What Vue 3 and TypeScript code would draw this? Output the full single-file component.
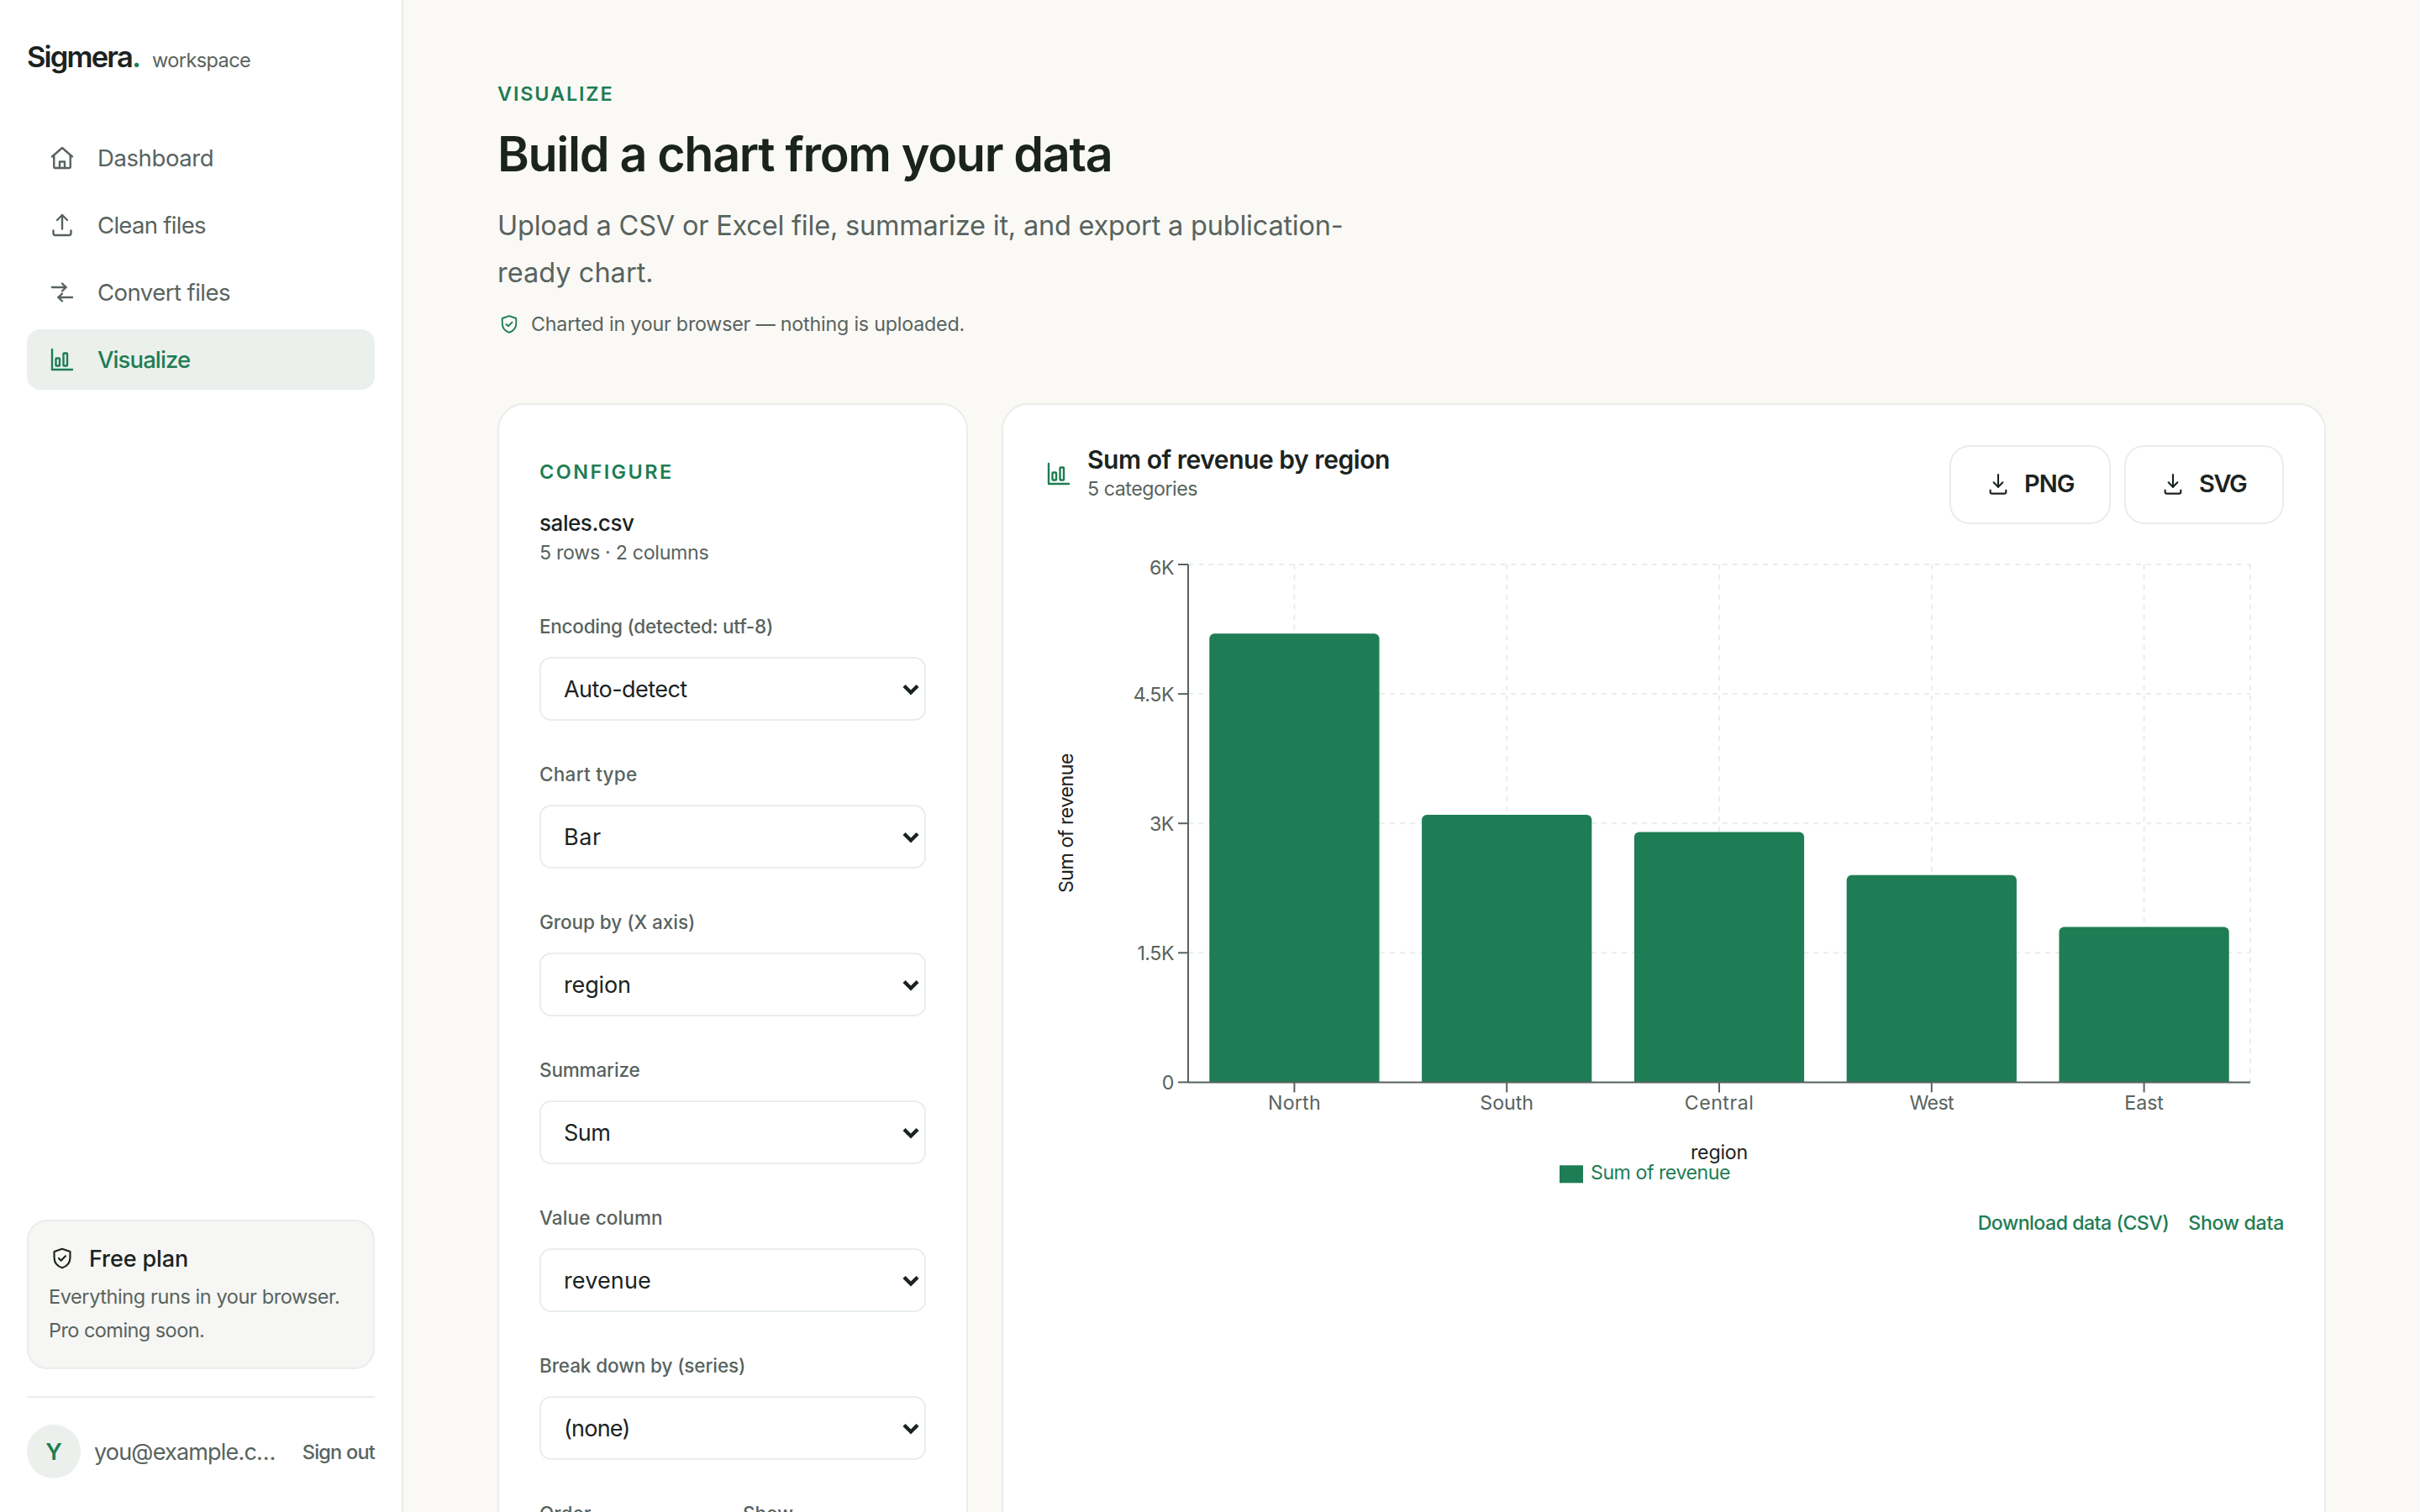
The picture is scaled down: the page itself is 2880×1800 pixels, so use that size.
<script setup lang="ts">
interface NavItem { label: string; icon: string[]; spacing: number; active?: boolean }
interface Field { label: string; labelSpacing: number; value: string; valueSpacing: number }
interface Region { name: string; revenue: number; spacing: number }

const chartIcon = ['M4 4v16h16', 'M7.5 11h2a.5.5 0 0 1 .5.5v5a.5.5 0 0 1-.5.5h-2a.5.5 0 0 1-.5-.5v-5a.5.5 0 0 1 .5-.5z', 'M13.5 7h2a.5.5 0 0 1 .5.5v9a.5.5 0 0 1-.5.5h-2a.5.5 0 0 1-.5-.5v-9a.5.5 0 0 1 .5-.5z']
const shieldIcon = ['M12 3.5l7.1 2.5v5.2c0 4.5-2.9 7.8-7.1 9.3-4.2-1.5-7.1-4.8-7.1-9.3V6z', 'M9 12l2 2 4-4']
const downloadIcon = ['M12 3v11', 'M8 10l4 4 4-4', 'M5 17v1.5A1.5 1.5 0 0 0 6.5 20h11a1.5 1.5 0 0 0 1.5-1.5V17']

const nav: NavItem[] = [
  { label: 'Dashboard', spacing: -0.0145, icon: ['M4 11l8-7 8 7', 'M5.5 10v9a1 1 0 0 0 1 1h11a1 1 0 0 0 1-1v-9', 'M10 20v-5h4v5'] },
  { label: 'Clean files', spacing: -0.0255, icon: ['M12 15V4', 'M8 8l4-4 4 4', 'M5 16.3v2.2A1.5 1.5 0 0 0 6.5 20h11a1.5 1.5 0 0 0 1.5-1.5v-2.2'] },
  { label: 'Convert files', spacing: -0.0195, icon: ['M4 8h11', 'M12 5l3 3-3 3', 'M20 16H9', 'M12 13l-3 3 3 3'] },
  { label: 'Visualize', spacing: -0.033, icon: chartIcon, active: true },
]

const fields: Field[] = [
  { label: 'Encoding (detected: utf-8)', labelSpacing: -0.0109, value: 'Auto-detect', valueSpacing: -0.0204 },
  { label: 'Chart type', labelSpacing: 0.0122, value: 'Bar', valueSpacing: 0.02 },
  { label: 'Group by (X axis)', labelSpacing: -0.002, value: 'region', valueSpacing: -0.0055 },
  { label: 'Summarize', labelSpacing: -0.0065, value: 'Sum', valueSpacing: -0.02 },
  { label: 'Value column', labelSpacing: 0.0052, value: 'revenue', valueSpacing: 0.0047 },
  { label: 'Break down by (series)', labelSpacing: -0.0046, value: '(none)', valueSpacing: -0.0287 },
]
const pairLabels: string[] = ['Order', 'Show']

const regions: Region[] = [
  { name: 'North', revenue: 5200, spacing: 0.0102 },
  { name: 'South', revenue: 3100, spacing: 0 },
  { name: 'Central', revenue: 2900, spacing: 0.0216 },
  { name: 'West', revenue: 2400, spacing: -0.0277 },
  { name: 'East', revenue: 1800, spacing: -0.0028 },
]

const plot = { left: 172, top: 32, width: 1264, height: 616.4 }
const bottom = plot.top + plot.height
const right = plot.left + plot.width
const maxValue = 6000
const yOf = (v: number): number => bottom - (v / maxValue) * plot.height
const band = plot.width / regions.length
const barWidth = band * 0.8
const radius = 6

const bars = regions.map((r, i) => {
  const center = plot.left + band * (i + 0.5)
  const x = center - barWidth / 2
  const y = yOf(r.revenue)
  const d = `M${x} ${bottom}V${y + radius}a${radius} ${radius} 0 0 1 ${radius} ${-radius}h${barWidth - 2 * radius}a${radius} ${radius} 0 0 1 ${radius} ${radius}V${bottom}Z`
  return { ...r, center, d }
})
const yTicks = [
  { label: '0', value: 0 },
  { label: '1.5K', value: 1500 },
  { label: '3K', value: 3000 },
  { label: '4.5K', value: 4500 },
  { label: '6K', value: 6000 },
].map((t) => ({ ...t, y: yOf(t.value), textY: yOf(t.value) + (t.value === maxValue ? 11.7 : 8.9) }))
</script>

<template>
  <div class="app">
    <aside class="sidebar">
      <div class="brand">
        <span class="brand-name">Sigmera<span class="brand-dot">.</span></span>
        <span class="brand-sub">workspace</span>
      </div>
      <nav class="nav">
        <a v-for="item in nav" :key="item.label" class="nav-item" :class="{ active: item.active }">
          <svg class="icon icon-lg" viewBox="0 0 24 24"><path v-for="d in item.icon" :key="d" :d="d" /></svg>
          <span :style="{ letterSpacing: item.spacing + 'em' }">{{ item.label }}</span>
        </a>
      </nav>
      <div class="sidebar-foot">
        <section class="plan">
          <div class="plan-head">
            <svg class="icon icon-md" viewBox="0 0 24 24"><path v-for="d in shieldIcon" :key="d" :d="d" /></svg>
            <span class="plan-name">Free plan</span>
          </div>
          <p class="plan-text"><span class="plan-line">Everything runs in your browser.</span><br /><span class="plan-line tight">Pro coming soon.</span></p>
        </section>
        <div class="user">
          <span class="avatar">Y</span>
          <span class="email">you@example.c…</span>
          <a class="signout">Sign out</a>
        </div>
      </div>
    </aside>

    <main class="main">
      <header class="page-head">
        <div class="eyebrow">VISUALIZE</div>
        <h1 class="title">Build a chart from your data</h1>
        <p class="subtitle">Upload a CSV or Excel file, summarize it, and export a publication-<br /><span class="subtitle-end">ready chart.</span></p>
        <div class="note">
          <svg class="icon icon-sm green" viewBox="0 0 24 24"><path v-for="d in shieldIcon" :key="d" :d="d" /></svg>
          <span>Charted in your browser — nothing is uploaded.</span>
        </div>
      </header>

      <div class="columns">
        <section class="card config">
          <div class="eyebrow config-eyebrow">CONFIGURE</div>
          <div class="file-name">sales.csv</div>
          <div class="file-meta">5 rows · 2 columns</div>
          <div class="fields">
            <div v-for="f in fields" :key="f.label" class="field">
              <div class="field-label" :style="{ letterSpacing: f.labelSpacing + 'em' }">{{ f.label }}</div>
              <div class="select">
                <span :style="{ letterSpacing: f.valueSpacing + 'em' }">{{ f.value }}</span>
                <svg class="chevron" viewBox="0 0 20 14"><path d="M2 2.500l8 8 8-8" /></svg>
              </div>
            </div>
            <div class="field-pair">
              <div v-for="label in pairLabels" :key="label" class="field-label">{{ label }}</div>
            </div>
          </div>
        </section>

        <section class="card chart-card">
          <div class="chart-head">
            <svg class="icon icon-lg green chart-icon" viewBox="0 0 24 24"><path v-for="d in chartIcon" :key="d" :d="d" /></svg>
            <div class="chart-titles">
              <div class="chart-title">Sum of revenue by region</div>
              <div class="chart-sub">5 categories</div>
            </div>
            <div class="actions">
              <button class="btn png" type="button">
                <svg class="icon icon-md" viewBox="0 0 24 24"><path v-for="d in downloadIcon" :key="d" :d="d" /></svg>
                <span class="btn-label">PNG</span>
              </button>
              <button class="btn svg-btn" type="button">
                <svg class="icon icon-md" viewBox="0 0 24 24"><path v-for="d in downloadIcon" :key="d" :d="d" /></svg>
                <span class="btn-label">SVG</span>
              </button>
            </div>
          </div>

          <svg class="chart" width="1476" height="784" viewBox="0 0 1476 784">
            <g class="grid">
              <line v-for="t in yTicks" :key="t.label" :x1="plot.left" :x2="right" :y1="t.y" :y2="t.y" />
              <line v-for="b in bars" :key="b.name" :x1="b.center" :x2="b.center" :y1="plot.top" :y2="bottom" />
              <line :x1="right" :x2="right" :y1="plot.top" :y2="bottom" />
            </g>
            <path v-for="b in bars" :key="b.name" class="bar" :d="b.d" />
            <g class="axis">
              <line :x1="plot.left" :x2="right" :y1="bottom" :y2="bottom" />
              <line :x1="plot.left" :x2="plot.left" :y1="plot.top" :y2="bottom" />
              <line v-for="t in yTicks" :key="t.label" :x1="plot.left - 12" :x2="plot.left" :y1="t.y" :y2="t.y" />
              <line v-for="b in bars" :key="b.name" :x1="b.center" :x2="b.center" :y1="bottom" :y2="bottom + 12" />
            </g>
            <text v-for="t in yTicks" :key="t.label" class="tick tick-y" x="155" :y="t.textY">{{ t.label }}</text>
            <text v-for="b in bars" :key="b.name" class="tick tick-x" :x="b.center" y="681" :style="{ letterSpacing: b.spacing + 'em' }">{{ b.name }}</text>
            <text class="axis-title" transform="translate(35 340) rotate(-90)">Sum of revenue</text>
            <text class="axis-title region-title" x="804" y="740">region</text>
            <rect class="bar" x="614" y="747.300" width="28" height="21" />
            <text class="legend" x="651" y="764">Sum of revenue</text>
          </svg>

          <div class="links">
            <a class="link download">Download data (CSV)</a>
            <a class="link">Show data</a>
          </div>
        </section>
      </div>
    </main>
  </div>
</template>

<style>
body { background: #faf9f6; }
</style>

<style scoped>
.app {
  --ink: #1b231f;
  --muted: #58635e;
  --green: #1e7d54;
  --line: #e8eeeb;
  --soft: #ebf0ed;
  display: flex;
  width: 2880px;
  height: 1800px;
  overflow: hidden;
  background: #faf9f6;
  color: var(--ink);
  font-family: Inter, "Liberation Sans", sans-serif;
  font-size: 27px;
}
.app * { box-sizing: border-box; }
h1, p { margin: 0; }
span, a, div, button, text { white-space: nowrap; }

.icon { flex: none; fill: none; stroke: currentColor; stroke-width: 1.6; stroke-linecap: round; stroke-linejoin: round; }
.icon-lg { width: 36px; height: 36px; }
.icon-md { width: 32px; height: 32px; }
.icon-sm { width: 28px; height: 28px; }
.green { color: var(--green); }

.sidebar {
  display: flex;
  flex-direction: column;
  flex: none;
  width: 480px;
  height: 1800px;
  padding: 45px 32px 40px;
  background: #fff;
  border-right: 2px solid var(--line);
  box-sizing: border-box;
}
.brand { display: flex; align-items: baseline; height: 45px; margin-bottom: 62px; }
.brand-name { font-size: 34.5px; line-height: 45px; font-weight: 600; letter-spacing: -0.053em; }
.brand-dot { color: var(--green); }
.brand-sub { margin-left: 15px; font-size: 23.5px; line-height: 30px; letter-spacing: -0.0248em; color: var(--muted); }

.nav { display: flex; flex-direction: column; gap: 8px; }
.nav-item {
  display: flex;
  align-items: center;
  gap: 24px;
  height: 72px;
  padding: 0 24px;
  border-radius: 16px;
  font-size: 27.5px;
  color: var(--muted);
}
.nav-item.active { background: var(--soft); color: var(--green); font-weight: 500; }

.sidebar-foot { margin-top: auto; }
.plan { height: 178px; padding: 24px; border: 2px solid var(--line); border-radius: 24px; background: #f6f6f4; }
.plan-head { display: flex; align-items: center; gap: 16px; height: 39px; font-weight: 500; }
.plan-name { padding-top: 2px; letter-spacing: -0.004em; }
.plan-text { margin: 7px 0 0; font-size: 23.5px; line-height: 40px; color: var(--muted); }
.plan-line { letter-spacing: -0.0175em; }
.plan-line.tight { letter-spacing: -0.0236em; }
.user { display: flex; align-items: center; margin-top: 32px; padding-top: 32px; border-top: 2px solid var(--line); color: var(--muted); }
.avatar {
  display: grid;
  place-items: center;
  width: 64px;
  height: 64px;
  border-radius: 50%;
  background: var(--soft);
  color: var(--green);
  font-size: 27.5px;
  font-weight: 600;
}
.email { margin-left: 16px; letter-spacing: -0.0301em; }
.signout { margin-left: auto; font-size: 23.5px; font-weight: 500; letter-spacing: -0.0328em; }

.main { flex: 1; min-width: 0; padding: 92px 112px 0; }
.eyebrow { font-size: 23.4px; line-height: 40px; font-weight: 600; letter-spacing: 0.0805em; color: var(--green); }
.title { margin-top: 19px; font-size: 57.4px; line-height: 64px; font-weight: 600; letter-spacing: -0.0228em; }
.subtitle { margin-top: 26px; font-size: 32.5px; line-height: 56px; letter-spacing: -0.0063em; color: var(--muted); }
.subtitle-end { letter-spacing: 0.0006em; }
.note { display: flex; align-items: center; gap: 12px; height: 37px; margin-top: 14px; font-size: 23.2px; letter-spacing: -0.0075em; color: var(--muted); }

.columns { display: grid; grid-template-columns: 560px 1576px; gap: 40px; margin-top: 76px; }
.card { min-height: 1400px; padding: 48px; border: 2px solid var(--line); border-radius: 32px; background: #fff; }

.config-eyebrow { margin-top: 13.5px; line-height: 36px; letter-spacing: 0.106em; }
.file-name { margin-top: 25px; font-size: 26px; line-height: 36px; font-weight: 500; letter-spacing: -0.0168em; }
.file-meta { margin-top: 1px; font-size: 23.2px; line-height: 32px; letter-spacing: -0.0128em; color: var(--muted); }
.fields { display: flex; flex-direction: column; gap: 45.5px; margin-top: 54px; }
.field-label { margin-bottom: 18.5px; font-size: 22.5px; line-height: 36px; font-weight: 500; color: var(--muted); }
.field-pair { display: grid; grid-template-columns: 1fr 1fr; gap: 24px; }
.select {
  display: flex;
  align-items: center;
  justify-content: space-between;
  height: 76px;
  padding: 0 6px 0 27px;
  border: 2px solid var(--line);
  border-radius: 14px;
}
.chevron { width: 20px; height: 14px; margin-top: 1px; fill: none; stroke: var(--ink); stroke-width: 4.4; }

.chart-head { display: flex; align-items: flex-start; height: 94px; }
.chart-icon { margin-top: 16px; }
.chart-titles { margin: -2px 0 0 16px; }
.chart-title { font-size: 30px; line-height: 38px; font-weight: 600; letter-spacing: -0.0152em; }
.chart-sub { margin-top: 1px; font-size: 23.2px; line-height: 30px; letter-spacing: -0.0197em; color: var(--muted); }
.actions { display: flex; gap: 16px; margin-left: auto; }
.btn {
  display: flex;
  align-items: center;
  gap: 15px;
  height: 94px;
  padding: 0 0 0 40px;
  border: 2px solid var(--line);
  border-radius: 24px;
  background: #fff;
  color: var(--ink);
  font: 600 29px Inter, "Liberation Sans", sans-serif;
}
.btn-label { padding-bottom: 3px; }
.png { width: 192px; letter-spacing: -0.0332em; }
.svg-btn { width: 190px; letter-spacing: -0.0492em; }

.chart { display: block; margin-top: 16px; }
.grid line { stroke: var(--line); stroke-width: 2; stroke-dasharray: 6 6; }
.axis line { stroke: var(--muted); stroke-width: 2; }
.bar { fill: var(--green); }
.tick { font-size: 23.2px; fill: var(--muted); }
.tick-y { text-anchor: end; letter-spacing: -0.02em; }
.tick-x { text-anchor: middle; }
.axis-title { font-size: 23.2px; fill: var(--ink); text-anchor: middle; letter-spacing: -0.021em; }
.region-title { letter-spacing: -0.0086em; }
.legend { font-size: 23.2px; fill: var(--green); letter-spacing: -0.021em; }

.links { display: flex; justify-content: flex-end; gap: 23px; margin-top: 16.5px; }
.link { font-size: 23.2px; line-height: 30px; font-weight: 500; letter-spacing: -0.0139em; color: var(--green); }
.link.download { letter-spacing: -0.0228em; }
</style>
